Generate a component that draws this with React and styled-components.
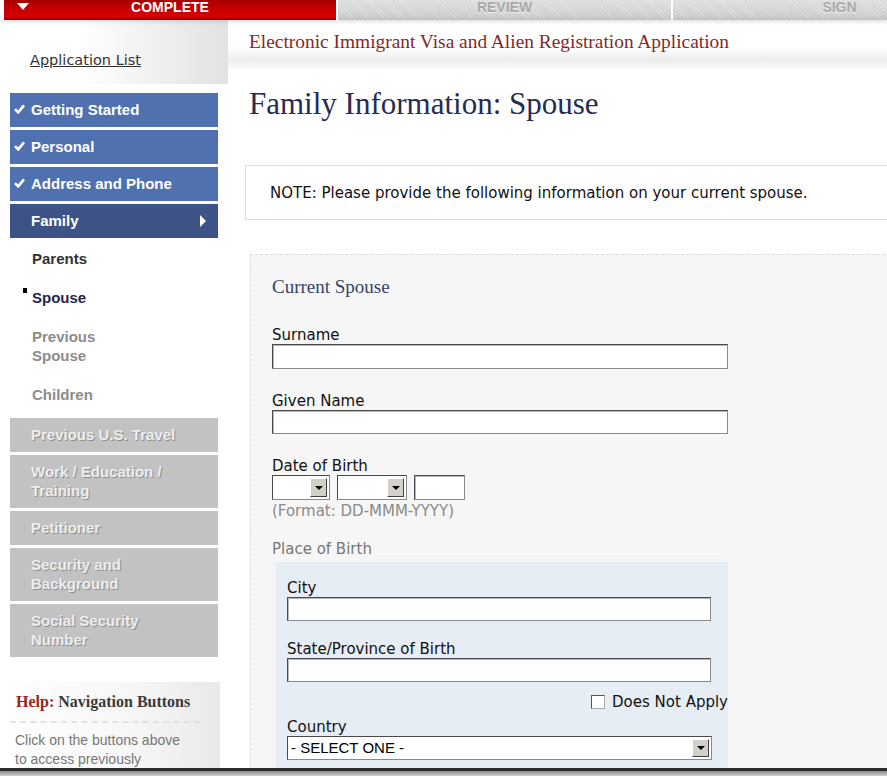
import React from 'react';
import styled, { createGlobalStyle } from 'styled-components';

const GlobalStyle = createGlobalStyle`
  html, body {
    margin: 0;
    padding: 0;
    background: #fff;
  }
  * {
    box-sizing: border-box;
  }
`;

const Page = styled.div`
  width: 887px;
  height: 776px;
  overflow: hidden;
  display: flex;
  flex-direction: column;
  background: #fff;
`;

const TabBar = styled.div`
  height: 20px;
  display: flex;
  flex-shrink: 0;
  padding-left: 4px;
  box-shadow: 0 2px 4px rgba(0, 0, 0, 0.12);
  position: relative;
  z-index: 1;
`;

const Tab = styled.div`
  position: relative;
  flex: 0 0 ${(p) => (p.$wide ? 333 : 332)}px;
  height: 20px;
  margin-right: 2px;
  text-align: center;
  font: bold 14px/14px 'Liberation Sans', Arial, sans-serif;
  color: ${(p) => (p.$active ? '#fff' : '#a9a9a9')};
  background: ${(p) =>
    p.$active
      ? 'linear-gradient(to bottom, #a80000 0%, #c80000 45%, #d60000 85%, #8e0000 100%)'
      : 'repeating-linear-gradient(45deg, rgba(255,255,255,0.25) 0 1px, transparent 1px 3px), linear-gradient(to bottom, #dedede 0%, #d0d0d0 70%, #bdbdbd 100%)'};
  text-shadow: ${(p) => (p.$active ? 'none' : '0 1px 0 #eee')};
`;

const TabArrow = styled.span`
  position: absolute;
  left: 13px;
  top: 3px;
  width: 0;
  height: 0;
  border-left: 6px solid transparent;
  border-right: 6px solid transparent;
  border-top: 7px solid #fff;
`;

const Body = styled.div`
  flex: 1;
  display: flex;
  overflow: hidden;
`;

const Sidebar = styled.aside`
  width: 228px;
  flex-shrink: 0;
`;

const SideTop = styled.div`
  height: 64px;
  padding: 30px 0 0 30px;
  background: linear-gradient(to right, #fff 35%, #e2e2e2 100%);
`;

const AppListLink = styled.a`
  font: 14.5px/20px 'DejaVu Sans', Verdana, sans-serif;
  color: #333;
  text-decoration: underline;
`;

const NavList = styled.div`
  padding: 9px 10px 0 10px;
`;

const NavItem = styled.div`
  position: relative;
  height: ${(p) => (p.$lines === 2 ? 53 : 34)}px;
  margin-bottom: 3px;
  padding: 7px 37px 8px 21px;
  font: bold 15px/19px 'Liberation Sans', Arial, sans-serif;
  color: ${(p) => (p.$tone === 'off' ? '#ededed' : '#fff')};
  text-shadow: ${(p) => (p.$tone === 'off' ? '1px 1px 0 #8f8f8f' : 'none')};
  background: ${(p) =>
    p.$tone === 'current' ? '#3d5386' : p.$tone === 'off' ? '#c2c2c2' : '#5071b0'};
`;

const Check = styled.svg`
  position: absolute;
  left: 4px;
  top: 11px;
  width: 11px;
  height: 10px;
`;

const NavArrow = styled.span`
  position: absolute;
  right: 12px;
  top: 11px;
  width: 0;
  height: 0;
  border-top: 6px solid transparent;
  border-bottom: 6px solid transparent;
  border-left: 6px solid #fff;
`;

const SubList = styled.div`
  margin-top: -2px;
  padding: 0 0 4px 22px;
`;

const SubItem = styled.div`
  position: relative;
  width: 100px;
  padding: 10px 0;
  font: bold 15px/19px 'Liberation Sans', Arial, sans-serif;
  color: ${(p) => (p.$state === 'done' ? '#333' : p.$state === 'current' ? '#262650' : '#8c8c8c')};
`;

const Bullet = styled.span`
  position: absolute;
  left: -9px;
  top: 10px;
  width: 4px;
  height: 5px;
  background: #000;
`;

const HelpBox = styled.div`
  margin: 25px 8px 0 6px;
  padding: 9px 0 0 9px;
  height: 120px;
  background: linear-gradient(to right, #fff 0%, #f6f6f6 60%, #e9e9e9 100%);
`;

const HelpTitle = styled.div`
  font: bold 16px/22px 'Liberation Serif', 'Times New Roman', serif;
  color: #3a3a3a;
  padding-bottom: 8px;
  margin-right: 20px;
  margin-left: -5px;
  padding-left: 6px;
  border-bottom: 2px dashed #e2e2e2;
  span {
    color: #9a2222;
  }
`;

const HelpText = styled.p`
  margin: 8px 0 0;
  font: 14px/19px 'Liberation Sans', Arial, sans-serif;
  color: #777;
`;

const Main = styled.main`
  flex: 1;
  min-width: 0;
`;

const Header = styled.div`
  height: 50px;
  padding: 12px 0 0 21px;
  font: 19.4px/20px 'Liberation Serif', 'Times New Roman', serif;
  color: #842828;
  white-space: nowrap;
  background: linear-gradient(to bottom, #fff 0%, #fff 55%, #ececec 80%, #fff 100%);
`;

const Title = styled.h1`
  margin: 17px 0 0 21px;
  font: normal 31px/34px 'Liberation Serif', 'Times New Roman', serif;
  color: #262b52;
`;

const Note = styled.div`
  margin: 44px 0 0 17px;
  height: 55px;
  width: 700px;
  padding: 0 0 0 24px;
  display: flex;
  align-items: center;
  border: 1px solid #dedede;
  font: 15px/18px 'DejaVu Sans', Verdana, sans-serif;
  color: #111;
`;

const FormPanel = styled.section`
  margin: 34px 0 0 22px;
  width: 700px;
  padding: 22px 0 40px 21px;
  background: #f6f6f6;
  border-top: 1px dashed #dcdcd4;
  border-left: 1px dashed #dcdcd4;
`;

const Legend = styled.div`
  font: 19px/20px 'Liberation Serif', 'Times New Roman', serif;
  color: #33446a;
  margin-bottom: 29px;
`;

const Field = styled.div`
  margin-bottom: ${(p) => p.$gap ?? 23}px;
`;

const Label = styled.div`
  font: 15px/18px 'DejaVu Sans', Verdana, sans-serif;
  color: ${(p) => (p.$muted ? '#777' : '#111')};
`;

const TextBox = styled.div`
  width: ${(p) => p.$w}px;
  height: ${(p) => p.$h ?? 25}px;
  background: #fff;
  border: 1px solid #8a8a8a;
  border-top-color: #4a4a4a;
  border-left-color: #4a4a4a;
  box-shadow: inset 1px 1px 0 #b8b8b8;
`;

const SelectBox = styled.div`
  width: ${(p) => p.$w}px;
  height: ${(p) => p.$h ?? 25}px;
  display: flex;
  align-items: center;
  justify-content: space-between;
  padding: 2px 2px 2px 3px;
  background: #fff;
  border: 1px solid #8a8a8a;
  border-top-color: #4a4a4a;
  border-left-color: #4a4a4a;
  font: 15px/18px 'Liberation Sans', Arial, sans-serif;
  color: #000;
`;

const DropButton = styled.span`
  width: 17px;
  height: 100%;
  display: flex;
  align-items: center;
  justify-content: center;
  background: #d4d0c8;
  border: 1px solid;
  border-color: #fff #404040 #404040 #fff;
  &::after {
    content: '';
    border-left: 4px solid transparent;
    border-right: 4px solid transparent;
    border-top: 4px solid #000;
  }
`;

const DateRow = styled.div`
  display: flex;
  gap: 7px;
`;

const Hint = styled.div`
  margin-top: 2px;
  font: 15px/18px 'DejaVu Sans', Verdana, sans-serif;
  color: #8a8a8a;
`;

const GroupHead = styled.div`
  display: flex;
  align-items: center;
  width: 450px;
  gap: 4px;
  &::after {
    content: '';
    flex: 1;
    margin-top: 8px;
    border-top: 1px solid #fff;
  }
`;

const Group = styled.div`
  margin: 4px 0 0 4px;
  width: 452px;
  padding: 17px 0 20px 11px;
  background: #e7edf5;
`;

const CheckRow = styled.label`
  display: flex;
  align-items: center;
  justify-content: flex-end;
  gap: 7px;
  margin: 11px 0 7px;
  font: 15px/18px 'DejaVu Sans', Verdana, sans-serif;
  color: #111;
`;

const CheckBox = styled.span`
  width: 14px;
  height: 14px;
  background: #fff;
  border: 1px solid #555;
  border-right-color: #aaa;
  border-bottom-color: #aaa;
`;

const BottomFrame = styled.div`
  height: 8px;
  flex-shrink: 0;
  border-top: 3px solid #2a2a2a;
  background: linear-gradient(to bottom, #8a8a8a, #cfcfcf);
`;

const completed = ['Getting Started', 'Personal', 'Address and Phone'];

const subItems = [
  { label: 'Parents', state: 'done' },
  { label: 'Spouse', state: 'current' },
  { label: 'Previous Spouse', state: 'todo' },
  { label: 'Children', state: 'todo' },
];

const upcoming = [
  { label: 'Previous U.S. Travel', lines: 1 },
  { label: 'Work / Education / Training', lines: 2 },
  { label: 'Petitioner', lines: 1 },
  { label: 'Security and Background', lines: 2 },
  { label: 'Social Security Number', lines: 2 },
];

export default function App() {
  return (
    <Page>
      <GlobalStyle />
      <TabBar>
        <Tab $active>
          <TabArrow />
          COMPLETE
        </Tab>
        <Tab $wide>REVIEW</Tab>
        <Tab $wide>SIGN</Tab>
      </TabBar>

      <Body>
        <Sidebar>
          <SideTop>
            <AppListLink href="#">Application List</AppListLink>
          </SideTop>

          <NavList>
            {completed.map((label) => (
              <NavItem key={label}>
                <Check viewBox="0 0 11 10">
                  <path d="M1 5.2 L4.2 8.4 L10 1.4" fill="none" stroke="#fff" strokeWidth="2.6" />
                </Check>
                {label}
              </NavItem>
            ))}
            <NavItem $tone="current">
              Family
              <NavArrow />
            </NavItem>

            <SubList>
              {subItems.map((item) => (
                <SubItem key={item.label} $state={item.state}>
                  {item.state === 'current' && <Bullet />}
                  {item.label}
                </SubItem>
              ))}
            </SubList>

            {upcoming.map((item) => (
              <NavItem key={item.label} $tone="off" $lines={item.lines}>
                {item.label}
              </NavItem>
            ))}
          </NavList>

          <HelpBox>
            <HelpTitle>
              <span>Help:</span> Navigation Buttons
            </HelpTitle>
            <HelpText>
              Click on the buttons above
              <br />
              to access previously
            </HelpText>
          </HelpBox>
        </Sidebar>

        <Main>
          <Header>Electronic Immigrant Visa and Alien Registration Application</Header>
          <Title>Family Information: Spouse</Title>
          <Note>NOTE: Please provide the following information on your current spouse.</Note>

          <FormPanel>
            <Legend>Current Spouse</Legend>

            <Field>
              <Label>Surname</Label>
              <TextBox $w={456} />
            </Field>

            <Field>
              <Label>Given Name</Label>
              <TextBox $w={456} $h={24} />
            </Field>

            <Field $gap={20}>
              <Label>Date of Birth</Label>
              <DateRow>
                <SelectBox $w={58}>
                  <span />
                  <DropButton />
                </SelectBox>
                <SelectBox $w={70}>
                  <span />
                  <DropButton />
                </SelectBox>
                <TextBox $w={51} />
              </DateRow>
              <Hint>(Format: DD-MMM-YYYY)</Hint>
            </Field>

            <GroupHead>
              <Label $muted>Place of Birth</Label>
            </GroupHead>
            <Group>
              <Field $gap={19}>
                <Label>City</Label>
                <TextBox $w={424} $h={24} />
              </Field>
              <Field $gap={0}>
                <Label>State/Province of Birth</Label>
                <TextBox $w={424} $h={24} />
              </Field>
              <CheckRow>
                <CheckBox />
                Does Not Apply
              </CheckRow>
              <Field $gap={0}>
                <Label>Country</Label>
                <SelectBox $w={425} $h={24}>
                  <span>- SELECT ONE -</span>
                  <DropButton />
                </SelectBox>
              </Field>
            </Group>
          </FormPanel>
        </Main>
      </Body>
      <BottomFrame />
    </Page>
  );
}
